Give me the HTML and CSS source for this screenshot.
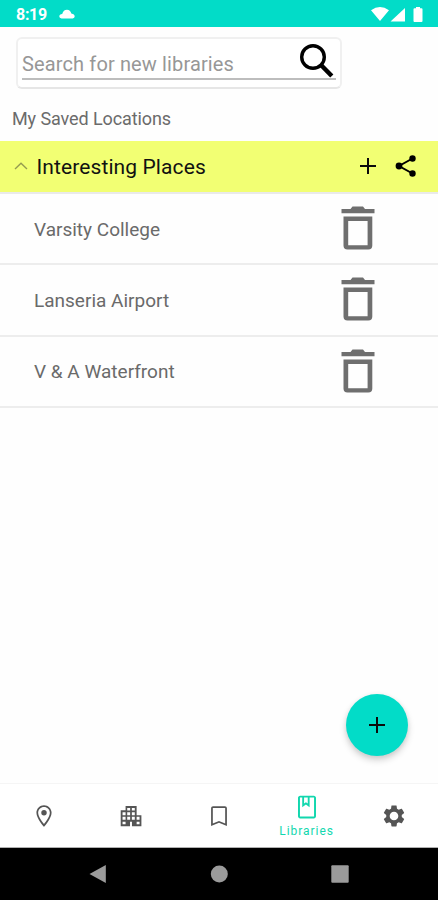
FILE: index.html
```html
<!DOCTYPE html>
<html lang="en">
<head>
<meta charset="utf-8">
<title>Libraries</title>
<link rel="stylesheet" href="styles.css">
</head>
<body>
<div class="screen">
  <header class="status">
    <span class="clock">8:19</span>
    <svg class="cloud" width="16" height="10" viewBox="0 0 16 10"><path d="M2.500 9.400Q.3 9.300.3 7.500.3 5.300 3.200 5 4.300.9 8 .8 11.500.9 12.300 4.600 15.700 5.300 15.700 7.600 15.600 9.400 13.700 9.400z"/></svg>
    <svg class="signals" width="52" height="17" viewBox="0 0 52 17"><path d="M0 4.300Q9 -2.200 18 4.300L9 15zM19.500 15.500H34V2zM42.500 3.200q0-1 1-1H45V1h4v1.200h1.500q1 0 1 1V15q0 1-1 1h-7q-1 0-1-1z"/></svg>
  </header>

  <main class="content">
    <div class="search">
      <div class="field">
        <span class="placeholder">Search for new libraries</span>
        <svg class="magnifier" width="36" height="36" viewBox="0 0 36 36"><circle cx="14" cy="14" r="11.300"/><path class="handle" d="M22.500 22.500L32.800 33"/></svg>
      </div>
    </div>
    <h1 class="caption">My Saved Locations</h1>

    <section class="group">
      <div class="group-head">
        <svg class="chevron" width="14" height="8" viewBox="0 0 14 8"><path d="M1 7L7 1.300L13 7"/></svg>
        <h2 class="group-title">Interesting Places</h2>
        <svg class="plus" width="16" height="16" viewBox="0 0 16 16"><path d="M8 0V16M0 8H16"/></svg>
        <svg class="share" width="22" height="24" viewBox="0 0 22 24"><path d="M17.500 4.500L4 12L17.500 19.500"/><circle cx="17.500" cy="4.500" r="3.200"/><circle cx="4" cy="12" r="3.400"/><circle cx="17.500" cy="19.500" r="3.200"/></svg>
      </div>
      <ul class="places">
        <li class="place"><span class="name">Varsity College</span>
          <svg class="trash" width="34" height="44" viewBox="0 0 34 44"><path fill-rule="evenodd" d="M.5 3H9.500L11.500 .5H22L24 3H33.500V7.300H.5zM2.500 10.500H31.300V39.500Q31.300 43.500 27.300 43.500H6.500Q2.500 43.500 2.500 39.500zM7.200 15V39.300H26.600V15z"/></svg></li>
        <li class="place"><span class="name">Lanseria Airport</span>
          <svg class="trash" width="34" height="44" viewBox="0 0 34 44"><path fill-rule="evenodd" d="M.5 3H9.500L11.500 .5H22L24 3H33.500V7.300H.5zM2.500 10.500H31.300V39.500Q31.300 43.500 27.300 43.500H6.500Q2.500 43.500 2.500 39.500zM7.200 15V39.300H26.600V15z"/></svg></li>
        <li class="place"><span class="name">V &amp; A Waterfront</span>
          <svg class="trash" width="34" height="44" viewBox="0 0 34 44"><path fill-rule="evenodd" d="M.5 3H9.500L11.500 .5H22L24 3H33.500V7.300H.5zM2.500 10.500H31.300V39.500Q31.300 43.500 27.300 43.500H6.500Q2.500 43.500 2.500 39.500zM7.200 15V39.300H26.600V15z"/></svg></li>
      </ul>
    </section>
  </main>

  <button class="fab" aria-label="Add"><svg class="plus" width="16" height="16" viewBox="0 0 16 16"><path d="M8 0V16M0 8H16"/></svg></button>

  <nav class="tabs">
    <div class="tab"><svg width="26" height="26" viewBox="0 0 24 24"><path d="M12 2C8.130 2 5 5.130 5 9c0 5.250 7 13 7 13s7-7.750 7-13c0-3.870-3.130-7-7-7zM6.600 9c0-2.980 2.420-5.400 5.400-5.400s5.400 2.420 5.400 5.400c0 3-3.080 7.500-5.400 10.400C9.680 16.500 6.600 12 6.600 9z"/><circle cx="12" cy="9" r="2.500"/></svg></div>
    <div class="tab"><svg width="26" height="26" viewBox="0 0 24 24"><path d="M17.200 11.300V2.700H7v4H2.500v14.700h8.600v-4h1.800v4h8.700V11.300zM7 19.700H4.200v-2.500H7zm0-4.200H4.200v-2.700H7zm0-4.200H4.200V8.500H7zm4.200 4.200H8.500v-2.700h2.700zm0-4.200H8.500V8.500h2.700zm0-4.300H8.500V4.500h2.700zm4.300 8.500h-2.700v-2.700h2.700zm0-4.200h-2.700V8.500h2.700zm0-4.300h-2.700V4.500h2.700zM19.900 19.700h-2.700v-2.500h2.700zm0-4.200h-2.700v-2.700h2.700z"/></svg></div>
    <div class="tab"><svg width="26" height="26" viewBox="0 0 24 24"><path d="M17.500 3h-11c-1 0-1.800.8-1.800 1.800V21.300l7.300-3 7.300 3V4.800c0-1-.8-1.800-1.800-1.800zm.2 16l-5.700-2.400L6.300 19V4.600h11.400z"/></svg></div>
    <div class="tab active"><svg width="26" height="26" viewBox="0 0 24 24"><path d="M18.300 1.500H5.700c-1.100 0-2 .9-2 2v17c0 1.100.9 2 2 2h12.600c1.100 0 2-.9 2-2v-17c0-1.100-.9-2-2-2zM9.300 3.200h3.400v5.600l-1.700-1.200-1.700 1.200zm9.200 17.500h-13V3.200h2.100v9L11 9.800l3.400 2.400v-9h4.100z"/></svg><span class="tab-label">Libraries</span></div>
    <div class="tab"><svg width="26" height="26" viewBox="0 0 24 24"><path d="M19.140 12.940c.04-.3.060-.61.060-.94 0-.32-.02-.64-.07-.94l2.030-1.580c.18-.14.230-.41.120-.61l-1.920-3.320c-.12-.22-.37-.29-.59-.22l-2.390.96c-.5-.38-1.030-.7-1.620-.94l-.36-2.540c-.04-.24-.24-.41-.48-.41h-3.840c-.24 0-.43.170-.47.410l-.36 2.540c-.59.240-1.130.570-1.620.940l-2.390-.96c-.22-.08-.47 0-.59.220L2.740 8.870c-.12.210-.08.470.120.610l2.030 1.580c-.05.300-.09.630-.09.940s.02.640.070.940l-2.030 1.580c-.18.140-.23.410-.12.610l1.920 3.320c.12.220.370.290.590.220l2.390-.96c.5.380 1.030.7 1.620.940l.36 2.540c.05.240.240.410.480.410h3.840c.24 0 .44-.17.470-.41l.36-2.540c.59-.24 1.130-.56 1.620-.94l2.390.96c.22.080.470 0 .590-.22l1.920-3.320c.12-.22.070-.47-.12-.61l-2.010-1.580zM12 16c-2.200 0-4-1.800-4-4s1.800-4 4-4 4 1.800 4 4-1.800 4-4 4z"/></svg></div>
  </nav>

  <footer class="system">
    <svg width="18" height="20" viewBox="0 0 18 20"><path d="M.5 10L16.800 1V19z"/></svg>
    <svg width="18" height="18" viewBox="0 0 18 18"><circle cx="9.300" cy="9" r="8.500"/></svg>
    <svg width="18" height="18" viewBox="0 0 18 18"><rect x=".3" y=".3" width="17.400" height="17.400" rx="1"/></svg>
  </footer>
</div>
</body>
</html>
```
FILE: styles.css
```css
* { box-sizing: border-box; margin: 0; padding: 0; }
body { background: #fefefe; font-family: Roboto, "Liberation Sans", sans-serif; }
svg { display: block; flex: none; }
.screen { position: relative; width: 438px; height: 900px; display: flex; flex-direction: column; overflow: hidden; }

.status { height: 27px; flex: none; background: #02dcc8; display: flex; align-items: center; padding: 1px 15px 0 16px; color: #fff; fill: #fff; }
.clock { font-size: 16px; font-weight: 700; line-height: 20px; letter-spacing: -.3px; margin-top: 1px; }
.cloud { margin-left: 12px; }
.signals { margin-left: auto; }

.content { flex: 1; padding-top: 10px; }
.search { width: 326px; height: 52px; margin-left: 15.500px; border: 2px solid #f0f0f0; border-bottom-color: #e6e6e6; border-radius: 6px; background: #fff; padding: 0 4px; }
.field { height: 41px; border-bottom: 2px solid #bdbdbd; display: flex; align-items: flex-start; justify-content: space-between; }
.placeholder { font-size: 20px; line-height: 24px; letter-spacing: .13px; margin-top: 13px; padding-left: .5px; color: #979797; white-space: nowrap; }
.magnifier { margin: 4px 1px 0 0; fill: none; stroke: #000; stroke-width: 3.400; }
.magnifier .handle { stroke-width: 4.500; }
.caption { font-size: 18px; font-weight: 400; line-height: 24px; letter-spacing: -.1px; margin: 18px 0 0 12px; color: #6b6b6b; }

.group { margin-top: 10px; }
.group-head { height: 51px; background: #f2ff73; display: flex; align-items: center; padding: 0 21px 0 14px; }
.chevron { fill: none; stroke: #949b50; stroke-width: 1.400; margin-top: -2px; }
.group-title { margin-left: 8.500px; font-size: 21px; font-weight: 400; line-height: 26px; letter-spacing: .1px; color: #111; margin-top: 1px; }
.plus { fill: none; stroke: #0b0b0b; stroke-width: 2; }
.group-head .plus { margin-left: auto; margin-top: -2px; }
.share { margin-left: 19.500px; margin-top: -2px; fill: #000; }
.share path { fill: none; stroke: #000; stroke-width: 2; }
.places { list-style: none; border-top: 2px solid #eaeaea; }
.place { height: 71.300px; display: flex; align-items: center; padding: 0 63px 0 34px; border-bottom: 2px solid #ededed; color: #6a6a6a; }
.name { font-size: 19px; line-height: 24px; margin-top: 2px; white-space: nowrap; }
.trash { margin: -1px 0 0 auto; fill: #6f6f6f; }

.fab { position: absolute; left: 346px; top: 694px; width: 62px; height: 62px; border: 0; border-radius: 50%; background: #02dcc8; display: flex; align-items: center; justify-content: center; box-shadow: 0 4px 7px rgba(0,0,0,.18), 0 1px 5px rgba(0,0,0,.06); }

.tabs { height: 65px; flex: none; background: #fff; border-top: 1px solid #f5f5f5; border-bottom: 1px solid #b0b0b0; display: flex; }
.tab { flex: 1; display: flex; flex-direction: column; align-items: center; padding-top: 19px; fill: #555; }
.tab.active { padding-top: 10px; fill: #12d7ae; color: #12d7ae; }
.tab-label { font-size: 12px; line-height: 14px; letter-spacing: .95px; margin-top: 4px; }

.system { height: 52px; flex: none; background: #000; fill: #9b9b9b; display: flex; align-items: center; justify-content: space-between; padding: 0 89px; }
```
